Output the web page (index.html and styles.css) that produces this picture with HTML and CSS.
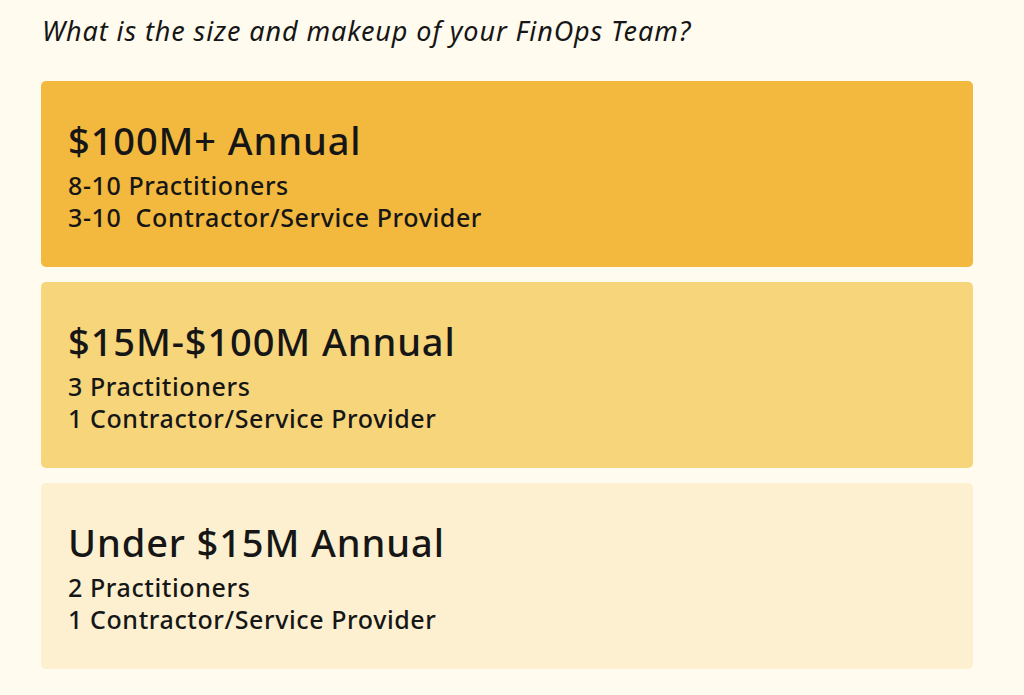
FILE: index.html
```html
<!DOCTYPE html>
<html lang="en">
<head>
<meta charset="utf-8">
<link rel="stylesheet" href="styles.css">
</head>
<body>
<main class="page">
  <p class="question">What is the size and makeup of your FinOps Team?</p>
  <section class="tiers">
    <div class="tier tier-large">
      <h2 class="tier-title">$100M+ Annual</h2>
      <p class="tier-line">8-10 Practitioners</p>
      <p class="tier-line">3-10&nbsp; Contractor/Service Provider</p>
    </div>
    <div class="tier tier-medium">
      <h2 class="tier-title">$15M-$100M Annual</h2>
      <p class="tier-line">3 Practitioners</p>
      <p class="tier-line">1 Contractor/Service Provider</p>
    </div>
    <div class="tier tier-small">
      <h2 class="tier-title">Under $15M Annual</h2>
      <p class="tier-line">2 Practitioners</p>
      <p class="tier-line">1 Contractor/Service Provider</p>
    </div>
  </section>
</main>
</body>
</html>
```
FILE: styles.css
```css
html, body {
  margin: 0;
  padding: 0;
  background: #fffbee;
}
body {
  font-family: "Noto Sans", "Open Sans", sans-serif;
  color: #161616;
}
.page {
  width: 932px;
  padding: 12px 0 0 41px;
}
.question {
  margin: 0 0 31px 1px;
  font-style: italic;
  font-size: 27px;
  line-height: 38px;
  letter-spacing: 0.9px;
}
.tiers {
  display: flex;
  flex-direction: column;
  gap: 15px;
}
.tier {
  height: 186px;
  box-sizing: border-box;
  border-radius: 5px;
  padding: 34px 27px 0;
}
.tier-large { background: #f3b93f; }
.tier-medium { background: #f7d57b; }
.tier-small { background: #fcf0d0; }
.tier-title {
  margin: 0 0 4px;
  font-size: 38px;
  font-weight: 500;
  line-height: 50px;
  letter-spacing: 0.9px;
}
.tier-line {
  margin: 0;
  font-size: 25px;
  font-weight: 500;
  line-height: 32px;
  letter-spacing: 0.6px;
}
```
